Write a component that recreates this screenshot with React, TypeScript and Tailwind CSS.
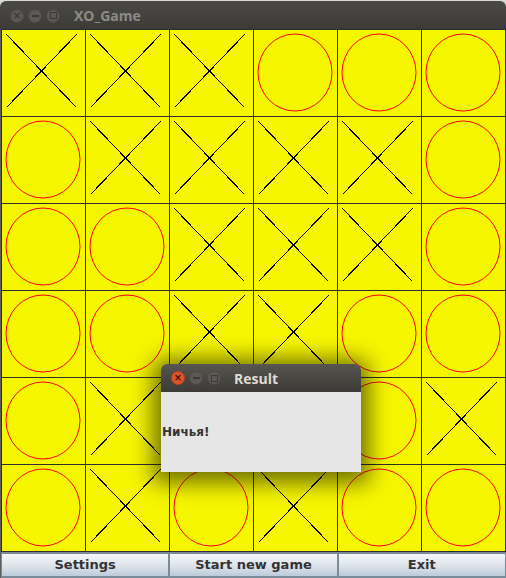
type Mark = "X" | "O"

const board: Mark[][] = [
  ["X", "X", "X", "O", "O", "O"],
  ["O", "X", "X", "X", "X", "O"],
  ["O", "O", "X", "X", "X", "O"],
  ["O", "O", "X", "X", "O", "O"],
  ["O", "X", "X", "O", "O", "X"],
  ["O", "X", "O", "X", "O", "O"],
]

function Cell({ mark }: { mark: Mark }) {
  return (
    <div className="bg-[#f6f600]">
      <svg width="83" height="86" viewBox="0 0 83 86" className="block">
        {mark === "X" ? (
          <g stroke="#000" strokeWidth="1" shapeRendering="crispEdges">
            <line x1="4.5" y1="4.5" x2="74.5" y2="77.5" />
            <line x1="74.5" y1="4.5" x2="4.5" y2="77.5" />
          </g>
        ) : (
          <ellipse cx="41" cy="42.5" rx="37" ry="38.5" fill="none" stroke="#ff0000" strokeWidth="1" />
        )}
      </svg>
    </div>
  )
}

function WinButtons({ active }: { active?: boolean }) {
  return (
    <div className="flex items-center gap-[4px]">
      <div
        className={
          active
            ? "w-[14px] h-[14px] rounded-full bg-[#e0542b] border border-[#b8401f] flex items-center justify-center text-[#3a1a10] text-[10px] leading-none font-bold"
            : "w-[14px] h-[14px] rounded-full bg-[#5a5955] border border-[#4b4a46] flex items-center justify-center text-[#3c3b37] text-[10px] leading-none font-bold"
        }
      >
        ×
      </div>
      <div className="w-[14px] h-[14px] rounded-full bg-[#5a5955] border border-[#4b4a46] flex items-center justify-center">
        <div className="w-[7px] h-[2px] bg-[#3a3935]" />
      </div>
      <div className="w-[14px] h-[14px] rounded-full bg-[#5a5955] border border-[#4b4a46] flex items-center justify-center">
        <div className="w-[7px] h-[7px] border border-[#3a3935]" />
      </div>
    </div>
  )
}

export default function App() {
  return (
    <div className="relative w-[506px] h-[578px] bg-[#d9d9d9] overflow-hidden" style={{ fontFamily: '"DejaVu Sans", sans-serif' }}>
      {/* Заголовок окна */}
      <div className="h-[29px] mt-px rounded-t-[6px] bg-gradient-to-b from-[#4a4945] to-[#3c3b37] flex items-center pl-[10px]">
        <WinButtons />
        <span className="ml-[14px] text-[14px] font-bold text-[#8c8b85]" style={{ fontFamily: '"Open Sans", sans-serif' }}>
          XO_Game
        </span>
      </div>

      <div className="border-l border-[#5c5c5c]">
        {/* Поле */}
        <div className="grid grid-cols-[repeat(6,83px)] grid-rows-[repeat(6,86px)] gap-px p-px bg-[#2e2e2e] w-[505px] -mt-px">
          {board.flat().map((m, i) => (
            <Cell key={i} mark={m} />
          ))}
        </div>

        {/* Кнопки */}
        <div className="flex h-[26px] bg-[#7a8a99] pt-px pb-px">
          {["Settings", "Start new game", "Exit"].map((t) => (
            <button
              key={t}
              className="flex-1 border border-[#7a8a99] bg-gradient-to-b from-[#f4f6f8] via-[#dfe5ec] to-[#bccbda] text-[13px] font-bold text-[#333333] flex items-center justify-center"
            >
              {t}
            </button>
          ))}
        </div>
      </div>

      {/* Диалог */}
      <div className="absolute left-[161px] top-[364px] w-[200px] h-[108px] shadow-[0_3px_22px_8px_rgba(0,0,0,0.55)] rounded-t-[6px]">
        <div className="h-[28px] rounded-t-[6px] bg-gradient-to-b from-[#56554f] to-[#3c3b37] flex items-center pl-[10px]">
          <WinButtons active />
          <span className="ml-[13px] text-[14px] font-bold text-[#dfdbd2]" style={{ fontFamily: '"Open Sans", sans-serif' }}>
            Result
          </span>
        </div>
        <div className="h-[80px] bg-[#e6e6e6] flex items-center">
          <span className="text-[12px] font-bold text-[#333333] pl-px">Ничья!</span>
        </div>
      </div>
    </div>
  )
}
